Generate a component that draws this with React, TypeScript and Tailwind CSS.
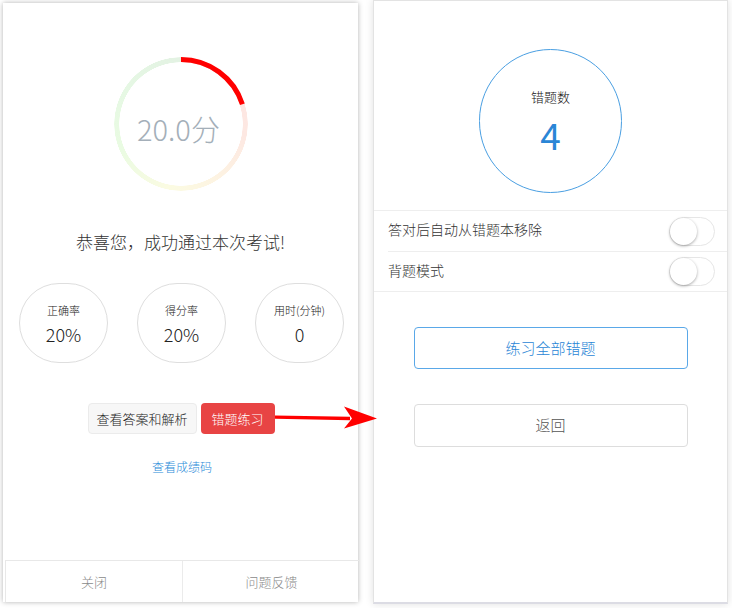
import React from "react";

const font = "font-['Noto_Sans_CJK_SC','Noto_Sans',sans-serif]";

function Toggle() {
  return (
    <div className="w-[46px] h-[29px] rounded-full border border-[#e6e6e6] bg-white relative">
      <div className="absolute left-0 top-[0px] w-[27px] h-[27px] rounded-full bg-white shadow-[0_1px_3px_rgba(0,0,0,0.35)]" />
    </div>
  );
}

function Stat({ label, value }: { label: string; value: string }) {
  return (
    <div className="w-[89px] h-[80px] rounded-full border border-[#dedede] flex flex-col items-center justify-center">
      <div className="text-[11px] leading-[14px] text-[#222] mt-[2px]">{label}</div>
      <div className="text-[18px] leading-[24px] text-[#222] mt-[5px] font-light">{value}</div>
    </div>
  );
}

export default function App() {
  const circ = 2 * Math.PI * 64.5;
  return (
    <div className={`relative w-[732px] h-[608px] bg-white overflow-hidden flex ${font}`}>
      {/* Left panel */}
      <div className="ml-[3px] mt-[3px] w-[355px] h-[599px] bg-white shadow-[0_0_5px_rgba(0,0,0,0.3)] flex flex-col items-center">
        <div className="relative mt-[54px] w-[134px] h-[134px] flex items-center justify-center">
          <div className="absolute inset-0 rounded-full bg-[conic-gradient(from_0deg,#fde3e3_0deg,#fde8e2_100deg,#fdf4e2_150deg,#fbfbe2_190deg,#e9fbe2_250deg,#e6f8e4_300deg,#e3f2e3_360deg)] [mask-image:radial-gradient(circle,transparent_61.5px,#000_62px,#000_66.5px,transparent_67px)]" />
          <svg className="absolute inset-0" width="134" height="134" viewBox="0 0 134 134">
            <circle
              cx="67"
              cy="67"
              r="64.5"
              fill="none"
              stroke="#ff0000"
              strokeWidth="5"
              strokeDasharray={`${circ * 0.2} ${circ}`}
              transform="rotate(-90 67 67)"
            />
          </svg>
          <div className="relative text-[29px] leading-none font-light text-[#a4afb9] mt-[8px] mr-[4px]">20.0分</div>
        </div>

        <div className="mt-[39px] text-[17px] leading-[23px] text-[#333] font-light">恭喜您，成功通过本次考试!</div>

        <div className="mt-[30px] flex gap-[29px] justify-center w-full pl-[2px] font-light">
          <Stat label="正确率" value="20%" />
          <Stat label="得分率" value="20%" />
          <Stat label="用时(分钟)" value="0" />
        </div>

        <div className="mt-[40px] flex gap-[4px] justify-center w-full pl-[1px] font-light">
          <div className="w-[109px] h-[31px] rounded-[4px] bg-[#f7f7f7] border border-[#ebebeb] flex items-center justify-center text-[13px] text-[#222]">
            查看答案和解析
          </div>
          <div className="w-[74px] h-[31px] rounded-[4px] bg-[#e84444] flex items-center justify-center text-[13px] text-white">
            错题练习
          </div>
        </div>

        <div className="mt-[25px] text-[12px] leading-[16px] text-[#2a8bd9] pl-[3px] font-light">查看成绩码</div>

        <div className="mt-auto w-[355px] ml-[4px] h-[42px] border-t border-l border-[#e8e8e8] flex text-[13px] text-[#8a8a8a] font-light">
          <div className="w-[177px] flex items-center justify-center border-r border-[#ebebeb]">关闭</div>
          <div className="flex-1 flex items-center justify-center">问题反馈</div>
        </div>
      </div>

      {/* Right panel */}
      <div className="ml-[15px] w-[355px] h-[604px] bg-white border border-[#e3e3e3] border-b-2 border-b-[#dcdce4] shadow-[0_0_8px_rgba(0,0,0,0.12)] flex flex-col items-center font-light">
        <div className="mt-[48px] w-[143px] h-[144px] rounded-full border border-[#4a9fe2] flex flex-col items-center justify-center">
          <div className="text-[13px] leading-[18px] text-[#111] mt-[0px]">错题数</div>
          <div className="text-[37px] leading-[40px] text-[#2a86d6] mt-[8px] font-normal">4</div>
        </div>

        <div className="mt-[17px] w-full border-t border-[#eeeeee]">
          <div className="h-[40px] flex items-center justify-between pl-[14px] pr-[12px]">
            <span className="text-[14px] text-[#333] mb-[3px]">答对后自动从错题本移除</span>
            <Toggle />
          </div>
          <div className="ml-[14px] border-t border-[#eeeeee] h-[40px] flex items-center justify-between pr-[12px]">
            <span className="text-[14px] text-[#333] mb-[3px]">背题模式</span>
            <Toggle />
          </div>
          <div className="border-t border-[#eeeeee]" />
        </div>

        <div className="mt-[35px] w-[274px] h-[42px] rounded-[4px] border border-[#5aa8e8] flex items-center justify-center text-[15px] text-[#2a86d6]">
          练习全部错题
        </div>
        <div className="mt-[35px] w-[274px] h-[43px] rounded-[4px] border border-[#dddddd] flex items-center justify-center text-[15px] text-[#555]">
          返回
        </div>
      </div>

      {/* Arrow */}
      <svg className="absolute left-[270px] top-[400px]" width="112" height="35" viewBox="270 400 112 35">
        <polygon points="275,415.5 350,416.8 350,420.2 275,418.8" fill="#ff0000" />
        <polygon points="344,406.5 377,418.5 344,428.5 352,418.5" fill="#ff0000" />
      </svg>
    </div>
  );
}
